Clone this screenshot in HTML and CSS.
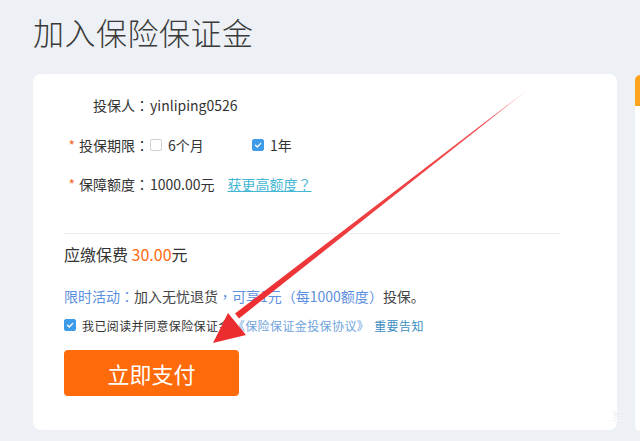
FILE: index.html
```html
<!DOCTYPE html>
<html lang="zh-CN">
<head>
<meta charset="utf-8">
<link rel="stylesheet" href="styles.css">
</head>
<body>
<div class="page">
  <h1 class="title">加入保险保证金</h1>
  <div class="main">
    <div class="card">
      <div class="row">
        <span class="label">投保人<span class="pc" lang="zh-TW">：</span></span>
        <span class="value">yinliping0526</span>
      </div>
      <div class="row">
        <span class="label"><i class="star">*</i>投保期限<span class="pc" lang="zh-TW">：</span></span>
        <span class="option"><span class="cb"></span>6个月</span>
        <span class="option"><span class="cb on"><svg viewBox="0 0 12 12"><path d="M3 6.2 L5.2 8.4 L9.2 4" fill="none" stroke="#fff" stroke-width="1.6" stroke-linecap="round" stroke-linejoin="round"/></svg></span>1年</span>
      </div>
      <div class="row">
        <span class="label"><i class="star">*</i>保障额度<span class="pc" lang="zh-TW">：</span></span>
        <span class="value">1000.00元</span>
        <a class="more">获更高额度<span class="pc" lang="zh-TW">？</span></a>
      </div>
      <div class="divider"></div>
      <div class="price">应缴保费 <span class="amount">30.00</span>元</div>
      <div class="promo"><span class="blue">限时活动<span class="pc" lang="zh-TW">：</span></span>加入无忧退货<span class="blue"><span class="pc" lang="zh-TW">，</span>可享1元<span class="pc" lang="zh-TW">（</span>每1000额度<span class="pc" lang="zh-TW">）</span></span>投保。</div>
      <div class="agree">
        <span class="cb on"><svg viewBox="0 0 12 12"><path d="M3 6.2 L5.2 8.4 L9.2 4" fill="none" stroke="#fff" stroke-width="1.6" stroke-linecap="round" stroke-linejoin="round"/></svg></span>
        <span>我已阅读并同意保险保证金</span><a class="doc">《保险保证金投保协议》</a><a class="notice">重要告知</a>
      </div>
      <button class="pay">立即支付</button>
    </div>
    <div class="side">
      <div class="side-head"></div>
    </div>
  </div>
  <svg class="arrow" width="640" height="441" viewBox="0 0 640 441">
    <defs>
      <linearGradient id="fade" x1="530" y1="88" x2="240" y2="322" gradientUnits="userSpaceOnUse">
        <stop offset="0" stop-color="#ee3a3c" stop-opacity="0.2"/>
        <stop offset="0.15" stop-color="#ee3a3c" stop-opacity="0.9"/>
        <stop offset="1" stop-color="#ec2d30"/>
      </linearGradient>
    </defs>
    <polygon points="531,87 239,318.5 235,313.5" fill="url(#fade)"/>
    <polygon points="213,343 228,313 246,335" fill="#ec2d30"/>
  </svg>
  <span class="wm">享</span>
</div>
</body>
</html>
```
FILE: styles.css
```css
* { box-sizing: border-box; }
html, body { margin: 0; padding: 0; }
body {
  background: #edf1f5;
  font-family: "Noto Sans CJK SC", "Noto Sans", sans-serif;
  color: #333;
  width: 640px;
  height: 441px;
  overflow: hidden;
}
.page {
  position: relative;
  padding-left: 33px;
  height: 441px;
  overflow: hidden;
}
.title {
  margin: 0;
  padding-top: 11px;
  height: 74px;
  font-size: 31px;
  line-height: 42px;
  font-weight: 300;
  color: #3a3a3a;
  letter-spacing: 0.5px;
}
.pc { font-family: "Noto Sans CJK TC", "Noto Sans CJK SC", sans-serif; }
.main {
  display: flex;
  gap: 18px;
  align-items: flex-start;
}
.card {
  width: 584px;
  flex: none;
  height: 356px;
  background: #fff;
  border-radius: 8px;
  padding: 11px 0 0 31px;
}
.row {
  display: flex;
  align-items: center;
  height: 40px;
  font-size: 14px;
}
.row:nth-child(3) { height: 38px; }
.label {
  width: 85px;
  text-align: right;
  flex: none;
}
.star {
  font-style: normal;
  color: #f06a2a;
  margin-right: 4px;
}
.value { padding-left: 1px; }
.option {
  display: inline-flex;
  align-items: center;
  width: 102px;
  padding-left: 1px;
}
.cb {
  display: inline-block;
  width: 12px;
  height: 12px;
  border: 1px solid #cfcfcf;
  border-radius: 2px;
  margin-right: 6px;
  background: #fff;
  flex: none;
}
.cb.on {
  background: #3d9be9;
  border-color: #3d9be9;
}
.cb svg { display: block; width: 10px; height: 10px; }
.more {
  margin-left: 13px;
  color: #45b6d3;
  text-decoration: underline;
}
.divider {
  width: 496px;
  height: 1px;
  background: #eeeeee;
  margin-top: 30px;
}
.price {
  margin-top: 8px;
  font-size: 16px;
  line-height: 24px;
}
.amount { color: #ff6a13; }
.promo {
  margin-top: 20px;
  font-size: 14px;
  line-height: 20px;
  color: #444;
}
.blue { color: #5d8fe0; }
.agree {
  margin-top: 9px;
  display: flex;
  align-items: center;
  height: 20px;
  font-size: 12px;
  letter-spacing: 0.4px;
}
.agree .cb { margin-right: 6px; }
.doc { color: #6fa3dc; margin-left: 2px; }
.notice { color: #3b8ec2; margin-left: 5px; }
.pay {
  margin-top: 15px;
  display: block;
  width: 175px;
  height: 46px;
  border: none;
  border-radius: 4px;
  background: #ff6a0b;
  color: #fff;
  font-family: "Noto Sans CJK SC", sans-serif;
  font-size: 22px;
  padding: 0;
}
.side {
  flex: none;
  width: 5px;
  height: 356px;
  margin-top: 1px;
  background: #fff;
  border-radius: 6px 0 0 6px;
  overflow: hidden;
}
.side-head {
  height: 31px;
  background: #ffa41b;
}
.arrow {
  position: absolute;
  left: 0;
  top: 0;
  pointer-events: none;
}
.wm {
  position: absolute;
  left: 612px;
  top: 406px;
  font-size: 14px;
  color: #f4f6f9;
  text-shadow: 0 0 1px #d8dee6;
}
```
